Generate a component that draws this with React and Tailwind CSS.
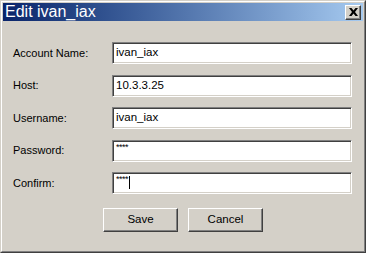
import React from "react";

const fields = [
  { label: "Account Name:", value: "ivan_iax" },
  { label: "Host:", value: "10.3.3.25" },
  { label: "Username:", value: "ivan_iax" },
  { label: "Password:", value: "****", secret: true },
  { label: "Confirm:", value: "****", secret: true, caret: true },
];

const Field = ({ label, value, secret, caret }) => (
  <div className="flex items-center h-[22px]">
    <div className="w-[99px] text-[11px] text-black leading-none">{label}</div>
    <div className="w-[240px] h-[22px] bg-white border border-t-[#808080] border-l-[#808080] border-r-white border-b-white shadow-[inset_1px_1px_0_#404040,inset_-1px_-1px_0_#d4d0c8] flex pl-[3px]">
      {secret ? (
        <div className="flex items-start pt-[2px] text-[9px] leading-none text-black tracking-[-0.5px]">
          {value}
          {caret && <span className="w-px h-[13px] bg-black ml-[1px] mt-[1px]" />}
        </div>
      ) : (
        <div className="flex items-center text-[11.5px] leading-none text-black">{value}</div>
      )}
    </div>
  </div>
);

const Button = ({ children }) => (
  <button className="w-[75px] h-[24px] bg-[#d4d0c8] border border-t-white border-l-white border-r-[#404040] border-b-[#404040] shadow-[inset_-1px_-1px_0_#808080] text-[11.5px] text-black leading-none">
    {children}
  </button>
);

export default function App() {
  return (
    <div className="w-[366px] h-[253px] bg-[#d4d0c8] font-['Liberation_Sans',Arial,sans-serif] border border-t-[#d4d0c8] border-l-[#d4d0c8] border-r-[#404040] border-b-[#404040]">
      <div className="h-full border border-t-white border-l-white border-r-[#808080] border-b-[#808080] p-px flex flex-col">
        {/* title bar */}
        <div className="h-[18px] flex items-center justify-between bg-gradient-to-r from-[#0a246a] to-[#a6caf0] pl-[2px] pr-[2px]">
          <span className="text-white text-[16px] leading-none">Edit ivan_iax</span>
          <div className="w-[16px] h-[15px] bg-[#d4d0c8] border border-t-white border-l-white border-r-[#404040] border-b-[#404040] shadow-[inset_-1px_-1px_0_#808080] flex items-center justify-center">
            <svg width="9" height="8" viewBox="0 0 9 8">
              <path d="M0 0h2.5l2 2.6 2-2.6H9L6 4l3 4H6.5l-2-2.6-2 2.6H0l3-4z" fill="#000" />
            </svg>
          </div>
        </div>

        {/* form */}
        <div className="flex flex-col gap-[10.5px] pl-[10px] pt-[21px]">
          {fields.map((f) => (
            <Field key={f.label} {...f} />
          ))}
        </div>

        <div className="flex justify-center gap-[10px] mt-[14px]">
          <Button>Save</Button>
          <Button>Cancel</Button>
        </div>
      </div>
    </div>
  );
}
